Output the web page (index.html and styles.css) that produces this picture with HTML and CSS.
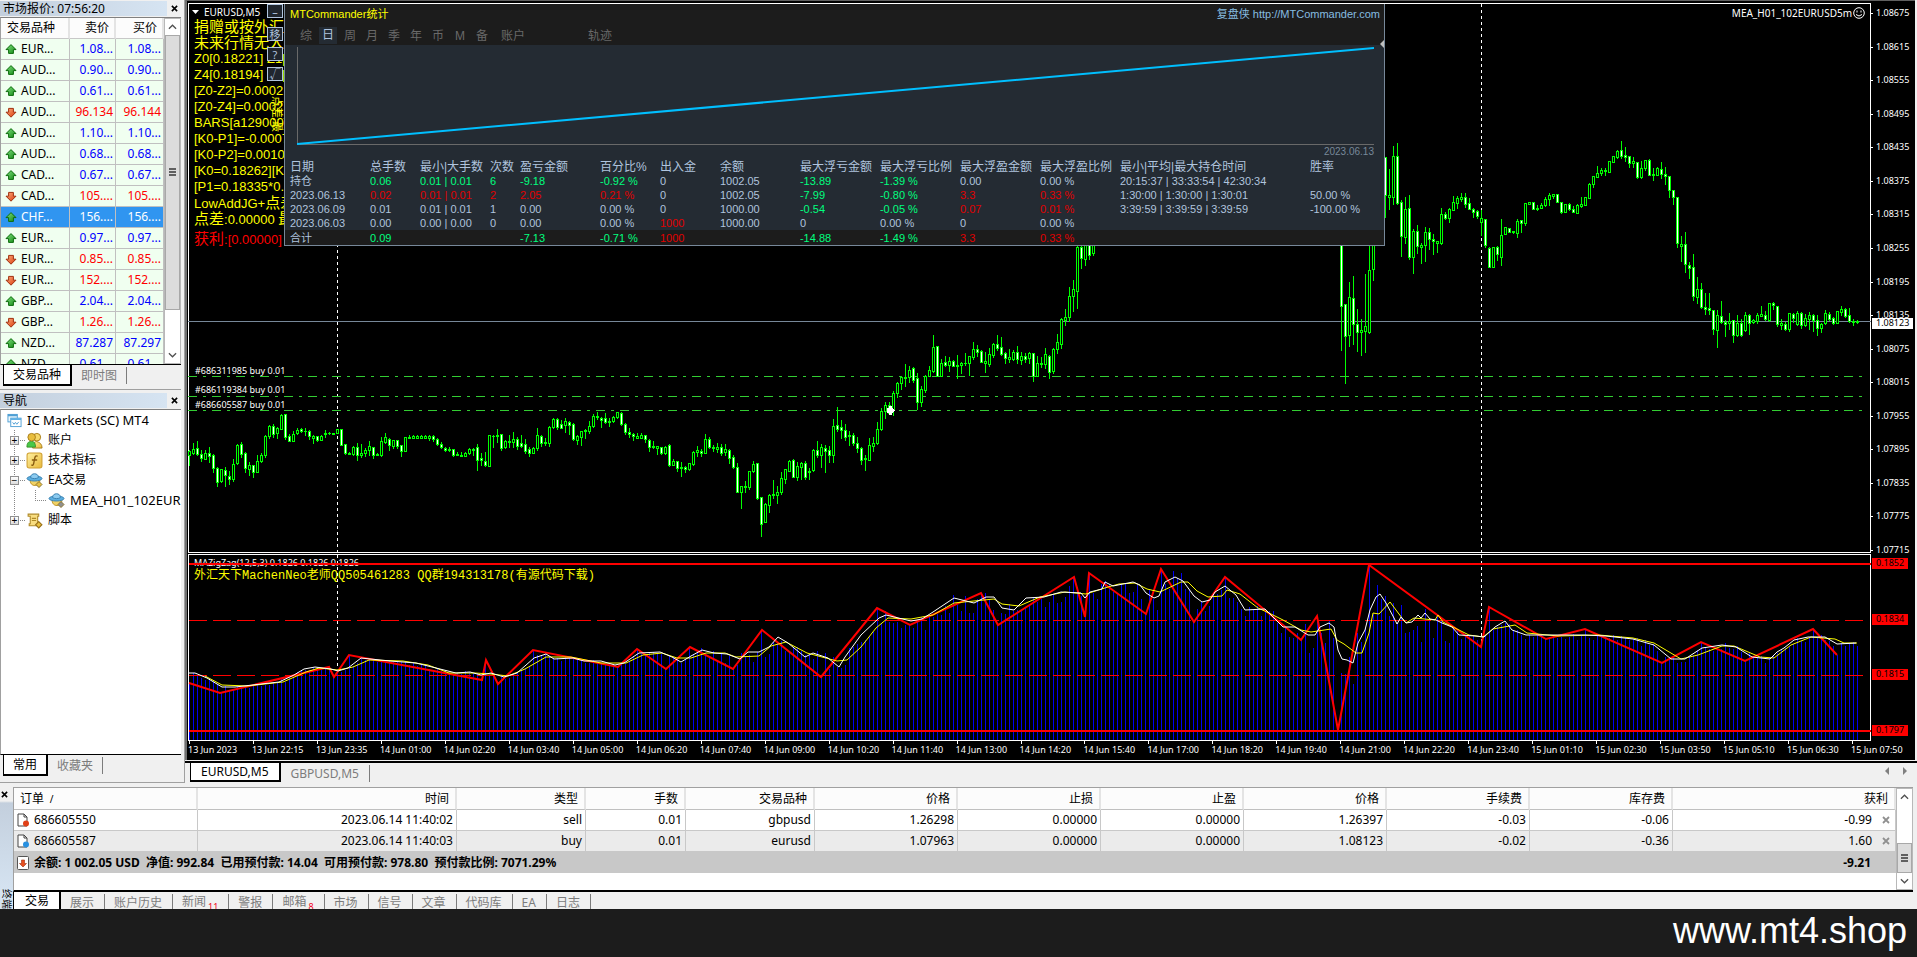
FILE: index.html
```html
<!DOCTYPE html>
<html lang="zh-CN">
<head>
<meta charset="utf-8">
<title>EURUSD,M5</title>
<link rel="stylesheet" href="styles.css">
</head>
<body>
<svg class="defs" aria-hidden="true">
  <defs>
    <linearGradient id="gUp" x1="0" y1="0" x2="1" y2="1"><stop offset="0" stop-color="#7fe07f"/><stop offset="1" stop-color="#138a13"/></linearGradient>
    <linearGradient id="gDown" x1="0" y1="0" x2="1" y2="1"><stop offset="0" stop-color="#ffb080"/><stop offset="1" stop-color="#d83808"/></linearGradient>
    <linearGradient id="gGold" x1="0" y1="0" x2="1" y2="1"><stop offset="0" stop-color="#fff0a0"/><stop offset="1" stop-color="#e8b838"/></linearGradient>
    <symbol id="up" viewBox="0 0 12 11"><path d="M6 .6 11 5.6H8.4V9.4H3.6V5.6H1Z" fill="url(#gUp)" stroke="#0c6c0c"/></symbol>
    <symbol id="down" viewBox="0 0 12 11"><path d="M6 10.2 11 5.2H8.4V1.4H3.6V5.2H1Z" fill="url(#gDown)" stroke="#a03010"/></symbol>
    <symbol id="terminals" viewBox="0 0 16 16"><rect x="1" y="1.5" width="10" height="8" fill="#eaf6fd" stroke="#4f9fd4"/><path d="M1 2.5h10" stroke="#4f9fd4" stroke-width="2"/><rect x="4" y="5.5" width="11" height="9" fill="#fff" stroke="#4f9fd4"/><path d="M4 6.5h11" stroke="#5fb0e4" stroke-width="2"/><path d="M6 10l1.500 2 1.500-2 1.500 2 2-2.500" fill="none" stroke="#4f9fd4"/></symbol>
    <symbol id="accounts" viewBox="0 0 18 18"><path d="M7 17c0-5 1-6 4-7 4 1 6 3 6 7z" fill="url(#gGold)" stroke="#a87c18"/><circle cx="11.500" cy="5.500" r="4" fill="#f5d768" stroke="#a87c18"/><path d="M1 16c0-4 1-6 5-6 3 0 4 2 4 6z" fill="#48c848" stroke="#389028"/><circle cx="6" cy="5.500" r="4" fill="#e8bd3c" stroke="#a87c18"/></symbol>
    <symbol id="func" viewBox="0 0 16 16"><rect x="1" y="1" width="14" height="14" rx="2" fill="url(#gGold)" stroke="#d0a030"/><path d="M11 4c-2-1-2.500 0-3 3l-.8 4c-.3 1.500-1 1.800-2.200 1.200M5.500 7.500h5" fill="none" stroke="#8a5c10" stroke-width="1.300"/></symbol>
    <symbol id="expert" viewBox="0 0 17 16"><path d="M4 7c0 4 2 6 5 6s5-3 5-6z" fill="#f2d264" stroke="#c09830"/><ellipse cx="8.500" cy="6" rx="7.500" ry="2.500" fill="#5aaee0" stroke="#3d84b4"/><path d="M4.500 5c0-5 8-5 8 0-2 1.500-6 1.500-8 0z" fill="#8ccbf0" stroke="#3d84b4"/><path d="M13 9l3 3-3 3-3-3z" fill="currentColor" stroke="#8a7430"/></symbol>
    <symbol id="script" viewBox="0 0 16 16"><path d="M2 2h10v2h-1v7h1v2H3v-2h1V4H2z" fill="#f8dd80" stroke="#b08a28"/><path d="M5.500 6h4M5.500 8h4" stroke="#b08a28"/><path d="M12 9l3 3-3 3-3-3z" fill="#e8c040" stroke="#987018"/></symbol>
    <symbol id="doc" viewBox="0 0 14 14"><path d="M2 1h6l3 3v9H2z" fill="#fff" stroke="#444"/><path d="M8 1v3h3" fill="none" stroke="#444"/><circle cx="10" cy="10.500" r="3" fill="currentColor"/></symbol>
    <symbol id="balance" viewBox="0 0 12 14"><rect x=".5" y=".5" width="11" height="13" rx="1" fill="#fff" stroke="#555"/><path d="M6 11 9.500 7.500H7.500V4h-3v3.500h-2z" fill="#e85020" stroke="#a03010" stroke-width=".6"/></symbol>
    <symbol id="chevUp" viewBox="0 0 10 6"><path d="M1 5l4-4 4 4" fill="none" stroke="#505050" stroke-width="1.400"/></symbol>
    <symbol id="chevDown" viewBox="0 0 10 6"><path d="M1 1l4 4 4-4" fill="none" stroke="#505050" stroke-width="1.400"/></symbol>
    <symbol id="close" viewBox="0 0 8 8"><path d="M1 1l6 6M7 1l-6 6" stroke="currentColor" stroke-width="1.800"/></symbol>
  </defs>
</svg>

<main class="workspace">
  <aside class="side">
    <section class="dock watch">
      <header class="dock-title"><h2>市场报价: 07:56:20</h2><button class="close" aria-label="关闭"><svg><use href="#close"/></svg></button></header>
      <div class="watch-body">
        <div class="watch-scroll">
          <table class="quotes">
            <colgroup><col class="q-sym"><col class="q-bid"><col class="q-ask"></colgroup>
            <thead><tr><th>交易品种</th><th>卖价</th><th>买价</th></tr></thead>
            <tbody id="quotes"></tbody>
          </table>
        </div>
        <div class="scrollbar"><button aria-label="向上"><svg><use href="#chevUp"/></svg></button><div class="thumb"><i></i></div><div class="track"></div><button aria-label="向下"><svg><use href="#chevDown"/></svg></button></div>
      </div>
      <nav class="tabs"><button class="tab active">交易品种</button><button class="tab">即时图</button></nav>
    </section>
    <section class="dock navigator">
      <header class="dock-title"><h2>导航</h2><button class="close" aria-label="关闭"><svg><use href="#close"/></svg></button></header>
      <ul class="tree">
        <li class="root"><svg class="ico"><use href="#terminals"/></svg>IC Markets (SC) MT4</li>
        <li class="node"><b>+</b><svg class="ico"><use href="#accounts"/></svg>账户</li>
        <li class="node"><b>+</b><svg class="ico"><use href="#func"/></svg>技术指标</li>
        <li class="node"><b>−</b><svg class="ico gold"><use href="#expert"/></svg>EA交易</li>
        <li class="leaf"><i></i><svg class="ico grey"><use href="#expert"/></svg>MEA_H01_102EURUSD5m</li>
        <li class="node last"><b>+</b><svg class="ico"><use href="#script"/></svg>脚本</li>
      </ul>
      <nav class="tabs"><button class="tab active">常用</button><button class="tab">收藏夹</button></nav>
    </section>
  </aside>

  <section class="charts">
    <div class="chart">
      <div class="plot price-plot">
        <svg class="canvas" viewBox="188 3 1683 550" preserveAspectRatio="none" shape-rendering="crispEdges">
          <path class="day" d="M337.500 4V553M1481.500 4V553"/>
          <path class="bid" d="M188 321.500H1871"/>
          <path class="order" d="M188 376.500H1864M188 396.500H1864M188 410.500H1864"/>
          <g id="candles"></g>
          <path class="entry" d="M887 408h2v-2h3v2l3 2.500-3 2.500v2h-3v-2h-2z"/>
        </svg>
        <div class="chart-name"><svg viewBox="0 0 7 4"><path d="M0 0h7L3.500 4z" fill="#fff"/></svg>EURUSD,M5</div>
        <div class="expert-name">MEA_H01_102EURUSD5m<svg viewBox="0 0 12 12"><circle cx="6" cy="6" r="5.300"/><path d="M4 3.500v2M8 3.500v2M3 7.500q3 3 6 0"/></svg></div>
        <div class="notes">
          <p class="zh">捐赠或按外汇</p><p class="zh">未来行情无人</p>
          <p>Z0[0.18221] Z1[</p><p>Z4[0.18194] Z5[</p>
          <p>[Z0-Z2]=0.00021</p><p>[Z0-Z4]=0.00027</p><p>BARS[a129000]</p><p>[K0-P1]=-0.0007</p>
          <p>[K0-P2]=0.0010</p><p>[K0=0.18262][K</p><p>[P1=0.18335*0.</p>
          <p>LowAddJG+<span class="zh">点差</span></p><p><span class="zh">点差</span>:0.00000 <span class="zh">最</span></p>
          <p class="profit"><span class="zh">获利</span>:[0.00000]</p>
        </div>
        <span class="side-note">点差:最</span>
        <span class="order-tag t1">#686311985 buy 0.01</span>
        <span class="order-tag t2">#686119384 buy 0.01</span>
        <span class="order-tag t3">#686605587 buy 0.01</span>
        <div class="tools"><button>–</button><button>移</button><button>?</button><button>√</button></div>

        <section class="panel">
          <header><h3>MTCommander统计</h3><a href="#site">复盘侠 http://MTCommander.com</a></header>
          <nav class="modes"><button>综</button><button class="on">日</button><button>周</button><button>月</button><button>季</button><button>年</button><button>币</button><button>M</button><button>备</button><button class="wide">账户</button><button class="trail">轨迹</button></nav>
          <div class="equity">
            <svg viewBox="0 0 1076 98" preserveAspectRatio="none"><path d="M.5 0V97.500H1076" fill="none" stroke="#696969"/><path d="M0 97 1076 1" stroke="#00bfff" stroke-width="2"/></svg>
            <span class="equity-date">2023.06.13</span>
          </div>
          <table class="stats">
            <colgroup id="statCols"></colgroup>
            <thead><tr><th>日期</th><th>总手数</th><th>最小|大手数</th><th>次数</th><th>盈亏金额</th><th>百分比%</th><th>出入金</th><th>余额</th><th>最大浮亏金额</th><th>最大浮亏比例</th><th>最大浮盈金额</th><th>最大浮盈比例</th><th>最小|平均|最大持仓时间</th><th>胜率</th></tr></thead>
            <tbody id="stats"></tbody>
          </table>
          <svg class="grip" viewBox="0 0 4 8"><path d="M4 0v8L0 4z" fill="#c0c0c0"/></svg>
        </section>
      </div>
      <div class="axis price-axis" id="prices"></div>
      <div class="plot sub-plot">
        <span class="ind-name">MAZigZag(12,5,3) 0.1826 0.1826 0.1826</span>
        <span class="ind-note">外汇天下MachenNeo老师QQ505461283 QQ群194313178(有源代码下载)</span>
        <svg class="canvas" viewBox="188 554 1683 187" preserveAspectRatio="none">
          <path class="day" shape-rendering="crispEdges" d="M337.500 555V741M1481.500 555V741"/>
          <path id="bars" shape-rendering="crispEdges"/>
          <path class="level" shape-rendering="crispEdges" d="M189 620.500H1864M189 675.500H1864"/>
          <polyline id="zigzag"/><polyline id="slow"/><polyline id="fast"/>
          <path class="limit" shape-rendering="crispEdges" d="M189 564H1871M189 731H1871"/>
        </svg>
      </div>
      <div class="axis sub-axis"><span class="l1">0.1852</span><span class="l2">0.1834</span><span class="l3">0.1815</span><span class="l4">0.1797</span></div>
      <div class="times" id="times"></div>
    </div>
    <nav class="tabs chart-tabs"><button class="tab active">EURUSD,M5</button><button class="tab">GBPUSD,M5</button>
      <span class="pager"><button aria-label="上一个"><svg viewBox="0 0 4 8"><path d="M4 0v8L0 4z"/></svg></button><button aria-label="下一个"><svg viewBox="0 0 4 8"><path d="M0 0v8l4-4z"/></svg></button></span></nav>
  </section>
</main>

<section class="terminal">
  <div class="strip"><button class="close" aria-label="关闭"><svg><use href="#close"/></svg></button><span>终端</span></div>
  <div class="terminal-main">
    <div class="terminal-body">
      <div class="orders-wrap">
        <table class="orders">
          <colgroup id="orderCols"></colgroup>
          <thead><tr><th>订单 <small>&nbsp;/</small></th><th>时间</th><th>类型</th><th>手数</th><th>交易品种</th><th>价格</th><th>止损</th><th>止盈</th><th>价格</th><th>手续费</th><th>库存费</th><th>获利</th></tr></thead>
          <tbody>
            <tr><td><svg class="doc sell"><use href="#doc"/></svg>686605550</td><td>2023.06.14 11:40:02</td><td>sell</td><td>0.01</td><td>gbpusd</td><td>1.26298</td><td>0.00000</td><td>0.00000</td><td>1.26397</td><td>-0.03</td><td>-0.06</td><td>-0.99<button aria-label="平仓"><svg><use href="#close"/></svg></button></td></tr>
            <tr class="alt"><td><svg class="doc buy"><use href="#doc"/></svg>686605587</td><td>2023.06.14 11:40:03</td><td>buy</td><td>0.01</td><td>eurusd</td><td>1.07963</td><td>0.00000</td><td>0.00000</td><td>1.08123</td><td>-0.02</td><td>-0.36</td><td>1.60<button aria-label="平仓"><svg><use href="#close"/></svg></button></td></tr>
            <tr class="sum"><td colspan="11"><svg class="doc"><use href="#balance"/></svg>余额: 1 002.05 USD&nbsp; 净值: 992.84&nbsp; 已用预付款: 14.04&nbsp; 可用预付款: 978.80&nbsp; 预付款比例: 7071.29%</td><td>-9.21</td></tr>
          </tbody>
        </table>
      </div>
      <div class="scrollbar"><button aria-label="向上"><svg><use href="#chevUp"/></svg></button><div class="track"></div><div class="thumb"><i></i></div><button aria-label="向下"><svg><use href="#chevDown"/></svg></button></div>
    </div>
    <nav class="tabs term-tabs"><button class="tab active">交易</button><button class="tab">展示</button><button class="tab">账户历史</button><button class="tab">新闻<sub>11</sub></button><button class="tab">警报</button><button class="tab">邮箱<sub>8</sub></button><button class="tab">市场</button><button class="tab">信号</button><button class="tab">文章</button><button class="tab">代码库</button><button class="tab">EA</button><button class="tab">日志</button></nav>
  </div>
</section>
<footer class="site">www.mt4.shop</footer>
<script src="chart.js"></script>
</body>
</html>
```
FILE: styles.css
```css
* { box-sizing: border-box; }
body { margin: 0; min-height: 100vh; display: flex; flex-direction: column; background: #f0f0f0; color: #000; font: 12px/16px "Noto Sans", "Noto Sans CJK SC", sans-serif; }
button { font: inherit; color: inherit; background: none; border: 0; padding: 0; margin: 0; }
h2, h3, p, ul { margin: 0; padding: 0; font-size: 12px; font-weight: 400; }
table { border-collapse: separate; border-spacing: 0; table-layout: fixed; width: 100%; }
.defs { position: absolute; width: 0; height: 0; }
.workspace { flex: 1; display: grid; grid-template-columns: 185px minmax(0, 1fr); min-height: 0; }

/* side docks */
.side { display: flex; flex-direction: column; border-right: 1px solid #a0a0a0; border-bottom: 1px solid #a0a0a0; gap: 2px; min-width: 0; }
.dock { display: flex; flex-direction: column; min-height: 0; margin-right: 3px; }
.watch { height: 390px; border-bottom: 1px solid #a0a0a0; }
.navigator { flex: 1; }
.dock-title { display: flex; align-items: center; height: 17px; flex: none; }
.dock-title h2 { flex: 1; height: 15px; line-height: 15px; padding-left: 3px; background: linear-gradient(90deg, #c3cfdd, #d6e4f2); }
.close { width: 14px; height: 14px; display: grid; place-items: center; }
.close svg { width: 7px; height: 7px; }
.watch-body { flex: 1; display: flex; min-height: 0; background: #fff; border-left: 1px solid #a0a0a0; border-top: 1px solid #808080; border-bottom: 1px solid #000; }
.watch-scroll { flex: 1; overflow: hidden; min-width: 0; }
.quotes th { height: 21px; padding: 0 5px 0 0; text-align: right; font-weight: 400; background: #fcfcfc; border-right: 2px solid #e4e4e4; border-bottom: 1px solid #c8c8c8; }
.quotes th:first-child { text-align: left; padding-left: 6px; }
.quotes td { height: 21px; padding: 0 2px 0 0; text-align: right; background: #f0fff0; border-right: 1px solid #c0c0c0; border-bottom: 1px solid #c0c0c0; color: #00f; white-space: nowrap; }
.quotes td:first-child { text-align: left; padding-left: 4px; color: #000; }
.quotes td svg { width: 12px; height: 11px; margin-right: 4px; vertical-align: -2px; }
.quotes .fall td:not(:first-child) { color: #f00; }
.quotes .sel td, .quotes .sel td:first-child { background: #3095f0; color: #fff; }
.q-sym { width: 69px; } .q-bid { width: 46px; }
.scrollbar { width: 17px; flex: none; display: flex; flex-direction: column; background: #fff; border: 1px solid #b8b8b8; }
.scrollbar button { height: 16px; flex: none; display: grid; place-items: center; }
.scrollbar svg { width: 9px; height: 6px; }
.thumb { flex: 88; display: grid; place-items: center; background: #dcdcdc; border: 1px solid #a8a8a8; }
.thumb i { width: 7px; height: 8px; background: repeating-linear-gradient(#606060 0 2px, #dcdcdc 2px 3px); }
.track { flex: 12; }
.tabs { display: flex; flex: none; height: 24px; align-items: flex-start; padding-left: 3px; }
.tab { height: 17px; line-height: 16px; margin-top: 2px; padding: 0 9px; color: #7c7c7c; border-right: 1px solid #7c7c7c; white-space: nowrap; }
.tab.active { height: 21px; line-height: 20px; margin-top: 0; color: #000; background: #fff; border: solid #000; border-width: 0 2px 2px 1px; }
.navigator .tabs { height: 27px; }
.tree { flex: 1; list-style: none; overflow: hidden; background: #fff; border-left: 1px solid #a0a0a0; border-top: 1px solid #808080; border-bottom: 1px solid #000; }
.tree li { display: flex; align-items: center; height: 20px; white-space: nowrap; }
.ico { width: 17px; height: 17px; flex: none; margin-right: 5px; }
.tree .root, .tree .leaf { font-size: 13px; }
.root .ico { width: 15px; margin-left: 6px; }
.node b { width: 9px; height: 9px; margin: 0 7px 0 9px; font: 10px/7px "Liberation Sans", sans-serif; text-align: center; border: 1px solid #909090; background: linear-gradient(#fff, #ddd); }
.node { background: repeating-linear-gradient(#888 0 1px, #fff 1px 2px) 13px 0 / 1px 100% no-repeat, repeating-linear-gradient(90deg, #888 0 1px, #fff 1px 2px) 19px 10px / 6px 1px no-repeat; }
.node.last { background-size: 1px 10px, 6px 1px; }
.leaf { background: repeating-linear-gradient(#888 0 1px, #fff 1px 2px) 13px 0 / 1px 100% no-repeat; }
.leaf i { flex: none; width: 11px; height: 11px; margin: 0 2px 9px 34px; border-left: 1px dotted #888; border-bottom: 1px dotted #888; }
.gold { color: #e8c040; } .grey { color: #909090; }

/* chart window */
.charts { display: flex; flex-direction: column; min-width: 0; }
.chart { flex: 1; min-height: 0; display: grid; grid-template-columns: minmax(0, 1fr) 44px; grid-template-rows: minmax(0, 550fr) 1px minmax(0, 187fr) 19px; margin-right: 2px; padding-top: 2px; background: #000; color: #fff; border-top: 1px solid #606060; border-left: 2px solid #707070; padding-left: 1px; font-size: 9px; line-height: 10px; }
.plot { position: relative; border: 1px solid #fff; min-width: 0; }
.price-plot { grid-area: 1 / 1; }
.sub-plot { grid-area: 3 / 1; }
.price-axis { grid-area: 1 / 2; }
.sub-axis { grid-area: 3 / 2; }
.times { grid-area: 4 / 1 / 5 / 3; }
.canvas { position: absolute; inset: -1px; width: calc(100% + 2px); height: calc(100% + 2px); fill: none; }
.day { stroke: #fff; stroke-dasharray: 3 3; }
.bid { stroke: #778899; }
.order { stroke: #32cd32; stroke-dasharray: 9 6 3 6; }
.entry { fill: #fff; }
.wick { stroke: #0f0; } .body { fill: #0f0; } .bull { fill: #000; } .bear { fill: #fff; }
#bars { stroke: #0000f0; }
#zigzag { stroke: #f00; stroke-width: 2; } #slow { stroke: #ff0; } #fast { stroke: #fff; }
.limit { stroke: #f00; stroke-width: 2; }
.level { stroke: #f00; stroke-dasharray: 18 6; }
.chart-name, .expert-name { position: absolute; display: flex; align-items: center; font-size: 10px; line-height: 12px; }
.chart-name { left: 3px; top: 2px; gap: 5px; }
.chart-name svg { width: 7px; height: 4px; }
.expert-name { right: 5px; top: 3px; gap: 1px; }
.expert-name svg { width: 12px; height: 12px; fill: none; stroke: #fff; }
.notes { position: absolute; left: 5px; top: 15px; color: #ff0; font: 13px/16px "Liberation Sans", "Noto Sans CJK SC", sans-serif; white-space: nowrap; }
.notes p { font-size: 13px; height: 16px; }
.notes .zh { font-size: 15px; line-height: 16px; }
.notes .profit { color: #f00; padding-top: 4px; }
.side-note { position: absolute; left: 82px; top: 92px; writing-mode: vertical-rl; text-orientation: sideways; color: #ff0; font-size: 11px; line-height: 13px; }
.order-tag { position: absolute; left: 6px; }
.t1 { top: 66%; } .t2 { top: 69.600%; } .t3 { top: 72.200%; }
.ind-name, .ind-note { position: absolute; left: 5px; white-space: nowrap; }
.ind-name { top: 3px; }
.ind-note { top: 13px; color: #ff0; font: 12px/16px "Liberation Mono", "Noto Sans CJK SC", monospace; }
.tools { position: absolute; left: 78px; top: 0; display: grid; gap: 6px; }
.tools button { width: 16px; height: 14px; line-height: 11px; font-size: 11px; color: #b0c4de; background: #20262e; border: 1px solid #b0c4de; }
.tools button:first-child { margin-bottom: 3px; }

/* statistics window */
.panel { position: absolute; left: 95px; right: 485px; top: 0; height: 242px; display: flex; flex-direction: column; background: #242b33; border: solid #778899; border-width: 0 1px 1px; color: #b0c4de; font: 11px/14px "Liberation Sans", "Noto Sans CJK SC", sans-serif; }
.panel header { display: flex; justify-content: space-between; height: 23px; padding: 3px 4px 0 5px; background: #1c1c1c; }
.panel h3 { color: #ff0; font-size: 11px; }
.panel header a { color: #87bde0; font-size: 11px; text-decoration: none; }
.modes { display: flex; height: 18px; padding-left: 10px; background: #1c1c1c; color: #696969; font-size: 12px; line-height: 16px; }
.modes button { width: 22px; }
.modes .on { background: #242b33; color: #b0c4de; width: 18px; margin: 0 2px; height: 17px; }
.modes .wide { width: 40px; }
.modes .trail { width: 40px; margin-left: 47px; }
.equity { height: 116px; padding: 2px 10px 0 12px; }
.equity svg { display: block; width: 100%; height: 98px; }
.equity-date { display: block; text-align: right; color: #778899; font-size: 10px; line-height: 14px; }
.stats th, .stats td { height: 14px; padding: 0; text-align: left; font-weight: 400; white-space: nowrap; overflow: visible; }
.stats th { font-size: 12px; }
.stats th:first-child, .stats td:first-child { padding-left: 5px; }
.stats .total td { background: #1c1c1c; height: 15px; }
.stats .g { color: #00ff7f; } .stats .r { color: #e00000; }
.grip { position: absolute; right: 0; top: 36px; width: 4px; height: 8px; }

/* scales */
.price-axis { position: relative; display: flex; flex-direction: column; justify-content: space-between; padding-top: 5px; margin-bottom: -2px; }
.price-axis span { position: relative; padding-left: 5px; height: 10px; }
.price-axis span::before { content: ""; position: absolute; left: 0; top: 5px; width: 2px; height: 1px; background: #fff; }
.price-axis .now { position: absolute; left: 1px; top: 57%; width: 41px; height: 11px; padding-left: 4px; background: #fff; color: #000; }
.price-axis .now::before { display: none; }
.sub-axis { position: relative; }
.sub-axis span { position: absolute; left: 1px; width: 36px; height: 11px; padding-left: 4px; background: #f00; color: #000; }
.l1 { top: 2%; } .l2 { top: 32%; } .l3 { top: 61.500%; } .l4 { top: 91.500%; }
.times { display: grid; grid-template-columns: repeat(27, minmax(0, 1fr)); }
.times span { position: relative; padding-top: 4px; white-space: nowrap; }
.times span::before { content: ""; position: absolute; left: 1px; top: 0; width: 1px; height: 3px; background: #fff; }
.chart-tabs { height: 22px; margin-top: 1px; padding-left: 5px; border-top: 2px solid #000; }
.chart-tabs .tab { padding: 0 10px; }
.chart-tabs .active { height: 19px; line-height: 18px; }
.pager { margin-left: auto; display: flex; gap: 14px; padding: 4px 10px; }
.pager svg { width: 4px; height: 8px; fill: #808080; display: block; }

/* terminal */
.terminal { display: flex; height: 126px; padding-top: 4px; flex: none; }
.strip { width: 13px; display: flex; flex-direction: column; background: linear-gradient(#f0f0f0 14px, #c3cfdd 16px, #d6e4f2 90%); }
.strip .close { width: 9px; }
.strip span { writing-mode: vertical-rl; margin-top: auto; font-size: 10px; line-height: 12px; text-orientation: sideways; }
.terminal-main { flex: 1; min-width: 0; display: flex; flex-direction: column; margin-right: 4px; }
.terminal-body { flex: 1; min-height: 0; display: flex; background: #fff; border-top: 1px solid #a0a0a0; border-left: 1px solid #a0a0a0; border-bottom: 2px solid #000; }
.orders-wrap { flex: 1; min-width: 0; overflow: hidden; }
.orders th { height: 22px; padding: 0 6px; text-align: right; font-weight: 400; background: #fcfcfc; border-right: 2px solid #e4e4e4; border-bottom: 1px solid #c0c0c0; }
.orders td { height: 21px; padding: 0 3px 0 2px; text-align: right; border-right: 1px solid #c8c8c8; border-bottom: 1px solid #c8c8c8; white-space: nowrap; }
.orders th:first-child, .orders td:first-child { text-align: left; }
.orders td:last-child { padding-right: 5px; }
.orders td button { width: 8px; height: 8px; margin-left: 10px; color: #909090; }
.orders td button svg { width: 8px; height: 8px; display: block; }
.orders .alt td { background: #ebebeb; }
.orders .sum td { background: #c8c8c8; border: 0; font-weight: 700; }
.orders .sum td:last-child { padding-right: 25px; }
.doc { width: 14px; height: 14px; margin-right: 4px; vertical-align: -3px; }
.sell { color: #e04018; } .buy { color: #2890e0; }
.terminal .thumb { flex: 42; } .terminal .track { flex: 58; }
.term-tabs { height: 17px; padding-left: 0; overflow: hidden; }
.term-tabs .tab { margin-top: 2px; padding-right: 10px; }
.term-tabs .active { margin-top: 0; padding: 0 10px 0 11px; border-bottom: 0; height: 17px; line-height: 17px; }
.tab sub { color: #f00020; font-size: 9px; line-height: 8px; vertical-align: -4px; margin-left: 2px; }
.site { flex: none; height: 48px; padding-right: 10px; background: #1c1c1c; color: #fff; text-align: right; font: 36px/44px "Liberation Sans", sans-serif; }
```
FILE: chart.js
```js
const $ = id => document.getElementById(id);

// Market watch: direction, symbol, bid, ask
const quotes = [
  ['u','EUR...','1.08...','1.08...'],['u','AUD...','0.90...','0.90...'],['u','AUD...','0.61...','0.61...'],
  ['d','AUD...','96.134','96.144'],['u','AUD...','1.10...','1.10...'],['u','AUD...','0.68...','0.68...'],
  ['u','CAD...','0.67...','0.67...'],['d','CAD...','105....','105....'],['s','CHF...','156....','156....'],
  ['u','EUR...','0.97...','0.97...'],['d','EUR...','0.85...','0.85...'],['d','EUR...','152....','152....'],
  ['u','GBP...','2.04...','2.04...'],['d','GBP...','1.26...','1.26...'],['u','NZD...','87.287','87.297'],['u','NZD...','0.61...','0.61...']];
$('quotes').innerHTML = quotes.map(([k, s, b, a]) =>
  `<tr class="${k === 'd' ? 'fall' : k === 's' ? 'sel' : ''}"><td><svg><use href="#${k === 'd' ? 'down' : 'up'}"/></svg>${s}</td><td>${b}</td><td>${a}</td></tr>`).join('');

// Column shares
const cols = list => { const t = list.reduce((a, b) => a + b); return list.map(w => `<col style="width:${w / t * 100}%">`).join(''); };
$('statCols').innerHTML = cols([85, 50, 70, 30, 80, 60, 60, 80, 80, 80, 80, 80, 190, 74]);
$('orderCols').innerHTML = cols([184, 259, 129, 100, 129, 143, 143, 143, 143, 143, 143, 223]);

// Statistics; a leading g or r sets the colour
const stats = [
  ['持仓','g0.06','g0.01 | 0.01','g6','g-9.18','g-0.92 %','0','1002.05','g-13.89','g-1.39 %','0.00','0.00 %','20:15:37 | 33:33:54 | 42:30:34',''],
  ['2023.06.13','r0.02','r0.01 | 0.01','r2','r2.05','r0.21 %','0','1002.05','g-7.99','g-0.80 %','r3.3','r0.33 %','1:30:00 | 1:30:00 | 1:30:01','50.00 %'],
  ['2023.06.09','0.01','0.01 | 0.01','1','0.00','0.00 %','0','1000.00','g-0.54','g-0.05 %','r0.07','r0.01 %','3:39:59 | 3:39:59 | 3:39:59','-100.00 %'],
  ['2023.06.03','0.00','0.00 | 0.00','0','0.00','0.00 %','r1000','1000.00','0','0.00 %','0','0.00 %','',''],
  ['合计','g0.09','','','g-7.13','g-0.71 %','r1000','','g-14.88','g-1.49 %','r3.3','r0.33 %','','']];
$('stats').innerHTML = stats.map((r, n) => `<tr class="${n === 4 ? 'total' : ''}">` + r.map(v =>
  /^[gr]/.test(v) ? `<td class="${v[0]}">${v.slice(1)}</td>` : `<td>${v}</td>`).join('') + '</tr>').join('');

// Scales
let px = '';
for (let p = 108675; p >= 107715; p -= 60) px += `<span>${(p / 1e5).toFixed(5)}</span>`;
$('prices').innerHTML = px + '<span class="now">1.08123</span>';
$('times').innerHTML = ['13 Jun 2023','13 Jun 22:15','13 Jun 23:35','14 Jun 01:00','14 Jun 02:20','14 Jun 03:40','14 Jun 05:00','14 Jun 06:20','14 Jun 07:40','14 Jun 09:00','14 Jun 10:20','14 Jun 11:40','14 Jun 13:00','14 Jun 14:20','14 Jun 15:40','14 Jun 17:00','14 Jun 18:20','14 Jun 19:40','14 Jun 21:00','14 Jun 22:20','14 Jun 23:40','15 Jun 01:10','15 Jun 02:30','15 Jun 03:50','15 Jun 05:10','15 Jun 06:30','15 Jun 07:50'].map(t => `<span>${t}</span>`).join('');

// Candles: direction + high,top,bottom,low, keyed by first bar index
const series = {
0: `u450,451,455,465 u443,449,453,454 d441,448,454,455 d450,454,458,461 u450,453,459,459 d447,453,456,462 d454,455,468,472 d467,468,482,486 u469,469,481,482 d467,470,475,486
d471,476,479,484 u459,464,479,481 u444,445,463,464 d442,444,454,457 d452,453,468,472 u462,465,469,475 d465,465,472,477 u455,461,472,472 u453,455,461,462 u435,436,455,457
u425,426,436,438 d424,426,434,437 u427,428,433,438 u414,415,429,429 d414,414,437,439 d434,436,441,441 u431,434,441,441 u428,430,433,434 d428,429,431,432 u428,431,431,435
d430,431,436,439 u435,436,438,443 d436,436,440,441 u435,436,440,440 u430,433,434,437 u432,433,433,434 u433,433,434,434 u429,429,433,433 d429,429,445,445 d444,444,453,454
u452,453,454,454 u446,447,454,455 d443,447,455,460 u444,453,455,457 u448,450,453,456 u441,446,450,455 d447,447,455,458 u453,454,455,455 u437,441,455,456 u433,437,442,443
d438,439,445,450 u440,440,446,448 d440,440,446,448 d445,445,451,456 u437,437,451,451 u435,437,438,438 u435,436,438,438 u435,436,438,438 u435,436,438,438 u435,436,438,438
u435,436,438,440 d435,436,439,441 d438,439,444,445 d442,444,447,448 d447,448,450,451 u447,449,450,451 d449,449,455,456 u452,454,455,455 u452,455,456,456 u452,453,456,456
u448,449,453,454 u448,449,450,455 d444,447,460,470 d453,458,460,465 d452,461,465,466 u435,435,466,466 u435,436,436,447 u429,435,436,442 d434,434,448,450 u440,441,447,448
u435,441,442,447 u432,439,442,447 d437,439,446,449 d435,443,446,447 d439,444,451,453 d447,449,453,456 u447,448,453,453 u428,435,448,450 d435,436,443,446 u438,442,443,445
u426,427,443,446 u418,419,427,428 d418,419,427,429 d420,424,428,428 u418,421,425,432 d421,422,425,434 d423,424,439,440 u435,436,440,444 u431,431,437,445 u429,430,431,438
u421,426,431,433 u414,416,426,427 u412,416,417,419 d417,418,420,427 d413,418,422,423 u418,421,422,426 u416,417,421,422 u412,412,417,418 d412,413,424,425 d423,424,432,434
d428,432,434,437 d433,434,436,440 u433,436,438,438 u433,435,438,438 d435,435,439,442 d439,440,447,451 u441,446,447,448 u446,446,448,454 d447,447,453,454 u446,447,453,454
d444,445,465,466 u459,461,465,465 d461,461,468,471 u462,467,468,476 d466,467,469,472 u463,463,469,470 u451,452,464,465 u446,450,452,456 d449,451,453,456 u434,439,453,453
d437,439,447,448 u445,447,448,451 u443,447,449,452 d444,447,453,455 u444,449,452,455 d449,450,458,463 d455,457,467,468 d463,467,492,492 u486,486,492,508 u481,486,487,492
u471,471,487,489 u461,464,471,472 d463,463,498,499 d497,497,524,536 u503,504,522,522 u494,495,505,512 u480,494,495,498 u486,492,495,503 u472,478,492,494 u469,469,479,483
u460,461,471,471 d459,460,477,477 u462,466,477,480 u462,463,467,479 d461,463,477,479 u468,471,472,479 u449,450,470,471 d441,450,455,457 u444,447,455,467 d445,448,451,472
d446,450,455,462 u419,426,455,462 d407,425,429,431 d420,427,430,438 d424,430,437,440 u431,435,436,445 d433,435,443,445 d437,443,448,452 d447,448,460,464 u455,458,459,470
u438,445,460,460 u437,443,446,451 u422,429,443,444 u408,411,429,430 u402,405,411,418 d402,405,413,414 u391,393,409,415 u382,383,393,397 u376,377,383,389 u364,377,378,386
u366,370,377,382 d367,368,380,382 d373,378,402,409 u386,389,402,406 u375,376,390,392 u366,370,376,376 u335,347,371,372 d346,346,376,376 u359,363,376,376 d356,362,365,366
u357,361,365,371 d360,361,366,366 u355,365,366,378 u362,363,365,373 u353,363,363,365 u356,356,363,375 u342,349,357,359 d345,349,352,356 d350,351,362,362 u352,361,363,372
u348,354,364,366 u343,344,355,357 d335,344,348,350 d337,347,354,355 d352,353,358,363 u349,357,359,362 u350,352,359,360 d346,352,359,363 u352,356,360,364 d353,356,359,362
u352,353,358,363 d353,353,376,381 u356,363,376,376 u357,363,364,367 u348,354,364,368 d355,356,372,378 u348,349,371,373 u334,342,349,353 u318,319,344,348 u309,317,320,325
u287,296,317,321 u280,289,296,311 u246,247,291,308 d240,247,258,268 u240,243,259,265 d240,243,255,259 u240,243,253,255`,
288: `d230,235,306,350 d304,304,336,383 u282,297,335,346 d276,298,324,344 d309,324,332,351 u319,330,332,355 u274,326,331,352 u245,270,332,333 u230,240,269,280`,
299: `d157,157,195,217 u169,195,197,209 u146,156,197,204 d143,156,203,204 d200,202,236,256 u197,209,237,243 d195,208,257,259 u229,231,257,273 d225,231,246,253 u243,245,247,263
u227,232,245,261 d228,232,239,249 d234,239,241,254 u241,241,243,252 u208,214,243,244 d212,214,218,219 u208,209,218,222 u196,202,210,210 u196,198,203,208 u193,197,199,201
d193,197,204,207 d198,203,209,209 d208,209,212,217 d210,211,216,218 u210,218,222,235 d219,219,245,247 d247,248,267,267 u247,247,267,267 d246,247,254,260 u219,235,257,265
u227,227,234,234 d228,228,232,232 u231,231,232,233 u219,221,233,237 d220,220,223,232 u203,203,223,225 u202,202,204,204 d202,202,209,209 u205,208,209,210 u203,205,208,208
u197,199,205,206 u193,195,199,205 u194,194,196,198 d194,194,202,202 d202,202,212,213 u204,204,212,212 d203,204,209,210 d206,209,212,212 u204,205,213,213 u197,204,206,207
u197,197,205,205 u183,184,198,198 u176,176,184,187 u166,173,177,177 u168,170,173,175 u168,170,171,175 u161,161,172,172 u156,156,162,162 u150,151,157,158 d141,150,156,158
d147,155,157,161 d156,156,163,167 u157,161,163,167 d162,162,177,178 u161,168,177,178 u160,160,168,170 d159,160,175,175 u168,174,175,180 u167,168,175,175 d162,169,174,178
d167,174,176,184 d176,176,190,197 d190,190,197,204 d197,197,243,247 u236,244,246,261 d232,244,264,272 d262,265,268,278 d254,267,296,300 u277,289,297,303 d283,289,307,308
d293,307,309,314 d293,308,310,314 d310,310,329,334 u310,315,330,347 d301,316,322,323 d320,322,324,336 u313,321,323,329 d320,320,335,342 u315,323,335,336 d319,323,335,336
u312,315,330,331 d314,315,323,334 u319,320,322,323 u313,315,321,323 u306,314,316,316 d311,315,319,320 u303,303,320,321 d302,303,305,309 d306,306,324,326 u319,323,325,329
d322,324,329,330 u313,313,329,331 d313,314,318,322 u311,313,324,325 d312,313,325,328 u314,318,325,326 u312,315,319,329 d314,315,320,331 d315,320,328,335 u323,324,328,332
u310,313,323,324 d312,314,319,320 d317,318,323,324 u311,311,323,323 u306,309,312,315 d308,309,316,317 d308,315,321,322 u319,321,322,325 u320,321,322,323`};
let wick = '', body = '', bull = '', bear = '';
for (const start in series) {
  series[start].trim().split(/\s+/).forEach((c, n) => {
    const x = 189 + 4 * (+start + n), [h, t, b, l] = c.slice(1).split(',').map(Number);
    wick += `M${x + .5} ${h}V${l + 1}`;
    body += `M${x - 1} ${t}h3v${b - t + 1}h-3z`;
    const inner = b - t - 1;
    if (inner > 0) { const r = `M${x} ${t + 1}h1v${inner}h-1z`; if (c[0] === 'u') bull += r; else bear += r; }
  });
}
$('candles').innerHTML = `<path class="wick" d="${wick}"/><path class="body" d="${body}"/><path class="bull" d="${bull}"/><path class="bear" d="${bear}"/>`;

// Indicator lines
const zigzag = [189,683,220,693,329,667,334,677,349,655,482,680,486,660,498,684,533,650,618,667,637,649,666,669,690,647,733,669,762,630,821,677,877,608,910,625,981,593,998,625,1074,577,1085,617,1089,573,1146,614,1161,569,1194,622,1225,577,1301,640,1317,616,1338,730,1369,565,1481,647,1489,607,1546,639,1585,629,1662,663,1701,642,1745,661,1813,629,1837,655];
const fast = [189,673,195,673,207,678,222,687,235,687,279,682,294,675,304,669,315,667,331,669,338,671,348,668,361,658,390,661,416,663,432,667,456,673,470,672,481,675,491,673,504,677,517,673,534,658,546,654,554,659,573,658,584,661,601,661,615,665,624,663,639,653,660,652,672,657,681,662,691,656,702,650,714,653,727,654,740,659,748,652,759,652,769,647,778,637,788,643,805,657,813,653,828,658,839,667,845,657,861,635,879,618,886,615,911,621,922,619,933,612,954,598,974,603,986,597,994,597,1002,608,1014,610,1026,598,1044,597,1061,592,1081,593,1085,598,1090,592,1102,589,1105,582,1113,586,1133,582,1140,585,1146,593,1154,598,1159,596,1165,582,1175,577,1183,581,1194,596,1202,602,1210,600,1215,592,1225,586,1236,595,1245,610,1265,609,1283,627,1295,627,1308,635,1315,635,1320,627,1329,623,1334,627,1338,650,1342,659,1347,660,1353,663,1358,643,1365,630,1370,610,1376,597,1380,594,1386,603,1394,618,1397,624,1401,617,1406,623,1412,622,1418,615,1421,618,1425,613,1430,619,1436,620,1442,623,1452,627,1459,635,1476,636,1484,637,1495,627,1505,621,1512,630,1526,635,1551,635,1585,635,1606,636,1633,639,1654,645,1671,659,1685,659,1702,648,1722,645,1736,647,1752,657,1770,659,1777,652,1784,648,1794,640,1808,637,1825,637,1837,644,1856,643];
const slow = [205,676,222,685,247,686,283,682,306,672,319,668,338,670,353,667,369,660,403,661,428,665,449,673,475,673,491,674,508,676,525,669,546,657,571,657,601,663,626,663,643,655,662,653,677,658,691,658,706,653,725,653,736,657,759,656,771,646,786,642,807,653,837,661,847,660,861,647,876,628,888,618,911,619,933,615,954,603,994,599,1002,604,1019,606,1040,597,1065,592,1086,594,1108,587,1119,584,1135,583,1147,589,1160,592,1181,582,1188,582,1197,591,1208,597,1222,596,1227,590,1240,594,1258,608,1269,613,1283,620,1301,630,1311,632,1331,629,1337,640,1344,644,1356,653,1362,653,1369,633,1373,613,1379,614,1390,602,1402,618,1406,623,1414,618,1435,620,1438,615,1443,622,1469,635,1483,637,1493,629,1515,625,1527,633,1558,636,1599,635,1633,638,1654,643,1681,659,1698,655,1722,646,1734,646,1760,657,1774,658,1791,645,1811,637,1835,639,1844,643,1857,643];
$('zigzag').setAttribute('points', zigzag.join(' '));
$('fast').setAttribute('points', fast.join(' '));
$('slow').setAttribute('points', slow.join(' '));

// Histogram follows the averages and touches the zigzag at its turns
const at = (line, x) => {
  let k = 0;
  while (k < line.length - 4 && line[k + 2] < x) k += 2;
  const f = Math.min(1, Math.max(0, (x - line[k]) / (line[k + 2] - line[k])));
  return line[k + 1] + f * (line[k + 3] - line[k + 1]);
};
let bars = '';
for (let i = 0; i < 418; i++) {
  const x = 189 + 4 * i;
  const s = Math.sin(i * 127.1) * 43758.5, n = s - Math.floor(s);
  const amp = x < 700 ? 5 : x < 880 ? 16 : x < 1300 ? 20 : x < 1450 ? 40 : 7;
  let y = at(fast, x) + (n - .35) * amp;
  for (let k = 0; k < zigzag.length; k += 2) if (Math.abs(zigzag[k] - x) < 3) y = zigzag[k + 1];
  bars += `M${x + .5} ${Math.round(y)}V740`;
}
$('bars').setAttribute('d', bars);
```
